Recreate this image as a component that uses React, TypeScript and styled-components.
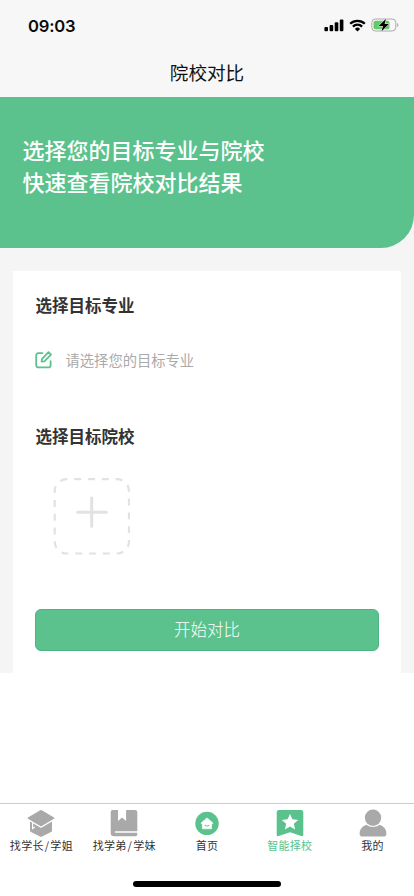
import React from "react";
import styled, { createGlobalStyle } from "styled-components";

const GREEN = "#5bc28e";
const GREY = "#a9a9a9";

const GlobalStyle = createGlobalStyle`
  * { box-sizing: border-box; }
  body {
    margin: 0;
    background: #fff;
    font-family: "Noto Sans CJK SC", sans-serif;
  }
`;

const Screen = styled.div`
  width: 414px;
  height: 896px;
  display: flex;
  flex-direction: column;
  background: #fff;
  overflow: hidden;
`;

const StatusBar = styled.header`
  height: 48px;
  flex: none;
  padding: 1px 15px 0 28px;
  display: flex;
  align-items: center;
  justify-content: space-between;
  background: #f7f7f7;
`;

const Clock = styled.span`
  font: 600 16.6px/24px Inter, sans-serif;
  letter-spacing: -0.2px;
  color: #0a0a0a;
  margin-top: 2px;
`;

const StatusIcons = styled.div`
  display: flex;
  align-items: center;
  gap: 5px;
  margin-top: 1px;
`;

const TitleBar = styled.div`
  height: 49px;
  flex: none;
  padding-bottom: 2px;
  display: flex;
  align-items: center;
  justify-content: center;
  background: #f7f7f7;
`;

const Title = styled.h1`
  margin: 0;
  font-size: 18.6px;
  line-height: 28px;
  font-weight: 400;
  color: #111;
`;

const Content = styled.main`
  height: 576px;
  flex: none;
  background: #f5f5f5;
`;

const Hero = styled.section`
  height: 151px;
  padding: 36px 22.5px 0;
  background: ${GREEN};
  border-bottom-right-radius: 33px;
  color: #fff;
  font-size: 22px;
  line-height: 32px;
  font-weight: 500;
`;

const Card = styled.section`
  height: 402.5px;
  margin: 22.5px 13px 0;
  padding: 22.5px 22px 0;
  background: #fff;
  display: flex;
  flex-direction: column;
`;

const Heading = styled.h2`
  margin: 0 0 0 0.5px;
  font-size: 16.5px;
  line-height: 24px;
  font-weight: 700;
  color: #333;
`;

const MajorField = styled.div`
  height: 24px;
  margin: 31px 0 52px;
  display: flex;
  align-items: center;
  gap: 12.5px;
  font-size: 14.3px;
  line-height: 24px;
  color: #aaa;
`;

const AddSchool = styled.div`
  width: 77px;
  height: 77px;
  margin: 30px 0 54px 18px;
  svg { display: block; }
`;

const StartButton = styled.button`
  height: 42px;
  padding: 0 0 2px;
  border: 1px solid #50b383;
  border-radius: 6px;
  background: ${GREEN};
  color: #fff;
  font-family: inherit;
  font-size: 16.5px;
  font-weight: 300;
`;

const TabBar = styled.nav`
  height: 64px;
  flex: none;
  margin-top: 130px;
  border-top: 1px solid #ccc;
  display: grid;
  grid-template-columns: repeat(5, 1fr);
`;

const Tab = styled.div<{ $active?: boolean }>`
  display: flex;
  flex-direction: column;
  align-items: center;
  padding-top: 4px;
  color: ${(p) => (p.$active ? GREEN : "#333")};
  font-size: 11px;
  line-height: 16px;
  letter-spacing: 0.3px;
  white-space: nowrap;
  svg { display: block; margin-bottom: -1px; }
`;

const Slash = styled.span`
  padding: 0 1px;
`;

const HomeIndicator = styled.div`
  width: 148px;
  height: 5.5px;
  margin: 14.3px auto 0;
  border-radius: 3px;
  background: #000;
`;

const SignalIcon = () => (
  <svg width="20" height="13" viewBox="0 0 20 13">
    <rect x="0.4" y="8" width="3.6" height="4.3" rx="1" />
    <rect x="5.6" y="6" width="3.6" height="6.3" rx="1" />
    <rect x="10.7" y="3.3" width="3.6" height="9" rx="1" />
    <rect x="15.8" y="0.5" width="3.6" height="11.8" rx="1" />
  </svg>
);

const WifiIcon = () => (
  <svg width="17" height="13" viewBox="0 0 17 13">
    <path d="M1.2 4.8a10.4 10.4 0 0 1 14.6 0M3.9 7.6a6.5 6.5 0 0 1 9.2 0" fill="none" stroke="#000" strokeWidth="2.3" />
    <path d="M8.5 12.5 5.9 9.9a3.7 3.7 0 0 1 5.2 0Z" />
  </svg>
);

const BatteryIcon = () => (
  <svg width="28" height="14" viewBox="0 0 28 14">
    <rect x="0.8" y="1" width="24" height="12" rx="3.6" fill="none" stroke="#aaa" />
    <path d="M26.2 5v4c1.6-.6 1.6-3.4 0-4Z" fill="#aaa" />
    <rect x="2.5" y="2.7" width="16" height="8.6" rx="2" fill="#63cb66" />
    <path d="M15 .7 7.7 7.9h4.3L10.4 13.5 17.9 6.1h-4.3Z" stroke="#f7f7f7" strokeWidth="1" paintOrder="stroke" />
  </svg>
);

const EditIcon = () => (
  <svg width="18" height="18" viewBox="0 0 18 18" fill="none" stroke={GREEN} strokeWidth="1.8" strokeLinecap="round" strokeLinejoin="round">
    <path d="M7.4 2.2H3.4A2.2 2.2 0 0 0 1.2 4.4v9.8a2.2 2.2 0 0 0 2.2 2.2h10a2.2 2.2 0 0 0 2.2-2.2v-4" />
    <path d="m13.5 1.2 2.5 2.5-6.6 6.6-2.8.4.4-2.9Z" />
  </svg>
);

const AddIcon = () => (
  <svg width="77" height="77" viewBox="0 0 77 77" fill="none" stroke="#e2e2e2">
    <rect x="1.7" y="1.2" width="74.3" height="74.3" rx="12" strokeWidth="2.2" strokeDasharray="6.9 6.87" strokeDashoffset="-7.6" />
    <path d="M38.7 20v28.3M24.6 34.2h28.8" strokeWidth="3" strokeLinecap="round" />
  </svg>
);

const GraduateIcon = () => (
  <svg width="28" height="30" viewBox="0 0 28 30" fill={GREY}>
    <path d="M13.2 2.3q.8-.4 1.6 0L27 9.5Q28 10.1 27 10.7L14.8 18q-.8.4-1.6 0L1 10.7Q0 10.1 1 9.5Z" />
    <path d="M3 13.4 13.2 19.5q.8.4 1.6 0L25 13.4v9q0 1.1-1 1.7L15 28.5q-1 .5-2 0L4 24.1q-1-.6-1-1.7Z" />
    <path d="M5.6 15v5.6l2.2-1.6" fill="none" stroke="#fff" strokeWidth="1.1" />
  </svg>
);

const BookIcon = () => (
  <svg width="28" height="30" viewBox="0 0 28 30" fill={GREY}>
    <path d="M2.5 2H8v11l4-3.4 4.1 3.4V2h8.8Q27.3 2 27.3 4v19.2H5.5a.7.7 0 0 0 0 1.5h21.8v1.6q0 1.9-1.8 1.9H4Q.7 28.2 .7 25V4Q.7 2 2.5 2Z" />
  </svg>
);

const HomeIcon = () => (
  <svg width="28" height="30" viewBox="0 0 28 30">
    <circle cx="14" cy="15.4" r="11.7" fill={GREEN} />
    <path d="m14 9.9 6 5.2-.7.9h-.7v4.8H9.4V16h-.7l-.7-.9Z" fill="#fff" stroke="#fff" strokeLinejoin="round" strokeWidth=".6" />
    <path d="M12.1 17.4q1.9 1.2 3.8 0" fill="none" stroke={GREEN} strokeWidth="1.1" strokeLinecap="round" />
  </svg>
);

const StarIcon = () => (
  <svg width="28" height="30" viewBox="0 0 28 30">
    <path d="M3 2h22q2.3 0 2.3 2.3v22.5q0 2-2 1.2L14 24.3 2.7 28q-2 .8-2-1.2V4.3Q.7 2 3 2Z" fill={GREEN} />
    <path d="m14 6.1 2.4 5.2 5.8.6-4.4 3.9 1.3 5.8-5.1-3-5.1 3 1.3-5.8-4.4-3.9 5.8-.6Z" fill="#fff" />
  </svg>
);

const PersonIcon = () => (
  <svg width="28" height="30" viewBox="0 0 28 30" fill={GREY}>
    <circle cx="14" cy="9.8" r="8.2" />
    <path d="M7.3 16.7q6.7 4.4 13.4 0 6.7 2.3 6.7 9 0 2.8-2.9 2.8h-21q-2.9 0-2.9-2.8 0-6.7 6.7-9Z" />
  </svg>
);

const tabs = [
  { label: "找学长/学姐", Icon: GraduateIcon },
  { label: "找学弟/学妹", Icon: BookIcon },
  { label: "首页", Icon: HomeIcon },
  { label: "智能择校", Icon: StarIcon, active: true },
  { label: "我的", Icon: PersonIcon },
];

const TabLabel = ({ text }: { text: string }) => {
  const [first, second] = text.split("/");
  return (
    <span>
      {first}
      {second && <Slash>/</Slash>}
      {second}
    </span>
  );
};

export default function App() {
  return (
    <Screen>
      <GlobalStyle />
      <StatusBar>
        <Clock>09:03</Clock>
        <StatusIcons>
          <SignalIcon />
          <WifiIcon />
          <BatteryIcon />
        </StatusIcons>
      </StatusBar>
      <TitleBar>
        <Title>院校对比</Title>
      </TitleBar>
      <Content>
        <Hero>
          选择您的目标专业与院校
          <br />
          快速查看院校对比结果
        </Hero>
        <Card>
          <Heading>选择目标专业</Heading>
          <MajorField>
            <EditIcon />
            请选择您的目标专业
          </MajorField>
          <Heading>选择目标院校</Heading>
          <AddSchool>
            <AddIcon />
          </AddSchool>
          <StartButton>开始对比</StartButton>
        </Card>
      </Content>
      <TabBar>
        {tabs.map(({ label, Icon, active }) => (
          <Tab key={label} $active={active}>
            <Icon />
            <TabLabel text={label} />
          </Tab>
        ))}
      </TabBar>
      <HomeIndicator />
    </Screen>
  );
}
